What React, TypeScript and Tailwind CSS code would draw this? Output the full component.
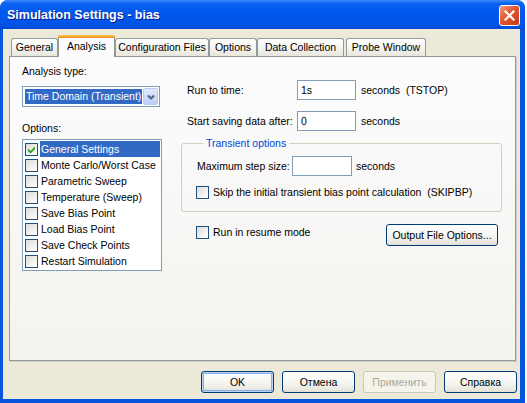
import React from "react";

const tabs = [
  { label: "General", w: "w-[47px]" },
  { label: "Analysis", w: "w-[57px]", active: true },
  { label: "Configuration Files", w: "w-[94px]" },
  { label: "Options", w: "w-[48px]" },
  { label: "Data Collection", w: "w-[87px]" },
  { label: "Probe Window", w: "w-[80px] ml-[2px]" },
];

const options = [
  "General Settings",
  "Monte Carlo/Worst Case",
  "Parametric Sweep",
  "Temperature (Sweep)",
  "Save Bias Point",
  "Load Bias Point",
  "Save Check Points",
  "Restart Simulation",
];

function CheckBox({ checked }: { checked?: boolean }) {
  return (
    <span className="w-[13px] h-[13px] shrink-0 border border-[#1C5180] bg-[linear-gradient(135deg,#DCDCD7,#FFFFFF)] flex items-center justify-center">
      {checked && (
        <svg width="9" height="9" viewBox="0 0 9 9">
          <path d="M1 3.5 L3.5 6 L8 1.5 L8 4 L3.5 8.5 L1 6 Z" fill="#21A121" />
        </svg>
      )}
    </span>
  );
}

function TextBox({ value, w }: { value: string; w: string }) {
  return (
    <div className={`${w} h-[20px] shrink-0 border border-[#7F9DB9] bg-white flex items-center pl-[3px]`}>
      {value}
    </div>
  );
}

function Button({
  children,
  w,
  disabled,
  isDefault,
}: {
  children: React.ReactNode;
  w: string;
  disabled?: boolean;
  isDefault?: boolean;
}) {
  return (
    <div
      className={`${w} h-[22px] shrink-0 rounded-[3px] border flex items-center justify-center ${
        disabled
          ? "border-[#C9C7BA] bg-[#F5F4EA] text-[#ACA899]"
          : "border-[#003C74] bg-[linear-gradient(to_bottom,#FFFFFF,#F4F3EE_60%,#E3E1D6)] text-black"
      } ${isDefault ? "shadow-[inset_0_0_0_1px_#BCD4F6,inset_0_0_0_2px_#89ADE4]" : ""}`}
    >
      {children}
    </div>
  );
}

export default function App() {
  return (
    <div className="w-[527px] h-[403px] bg-white overflow-hidden whitespace-nowrap font-['Liberation_Sans',Arial,sans-serif] text-[10.5px] leading-[13px] text-black">
      <div className="w-[525px] h-[403px] rounded-t-[8px] bg-[#0855DD] flex flex-col">
        {/* Title bar */}
        <div className="h-[29px] shrink-0 rounded-t-[8px] bg-[linear-gradient(to_bottom,#3D8EFB_0%,#0A61F1_12%,#0058EE_40%,#0055E8_80%,#0049D6_100%)] flex items-center justify-between pl-[7px] pr-[5px] pt-[1px]">
          <span className="text-white font-bold text-[12.5px] [text-shadow:1px_1px_0_#0A1E8A]">
            Simulation Settings - bias
          </span>
          <div className="w-[21px] h-[21px] rounded-[3px] border border-white bg-[linear-gradient(135deg,#F09A7C,#E2552C_45%,#C63A17)] flex items-center justify-center">
            <svg width="11" height="11" viewBox="0 0 11 11">
              <path d="M1.5 1.5 L9.5 9.5 M9.5 1.5 L1.5 9.5" stroke="white" strokeWidth="2.2" strokeLinecap="square" />
            </svg>
          </div>
        </div>

        {/* Body */}
        <div className="flex-1 ml-[3px] mr-[5px] mb-[4px] bg-[#ECE9D8] pt-[6px] pl-[6px] pr-[4px] flex flex-col">
          {/* Tabs */}
          <div className="h-[21px] flex items-end pl-[2px]">
            {tabs.map((t) =>
              t.active ? (
                <div
                  key={t.label}
                  className={`${t.w} h-[22px] -mb-[1px] relative z-10 rounded-t-[3px] border-x border-[#919B9C] bg-[#FCFCFE] flex flex-col`}
                >
                  <div className="h-[3px] rounded-t-[3px] bg-[linear-gradient(to_bottom,#FFC83C,#E68B2C)] -mx-[1px]" />
                  <div className="flex-1 flex items-center justify-center pb-[3px]">{t.label}</div>
                </div>
              ) : (
                <div
                  key={t.label}
                  className={`${t.w} h-[18px] rounded-t-[3px] border-t border-x border-[#919B9C] bg-[linear-gradient(to_bottom,#FFFFFF,#F3F2EC_60%,#E8E6DC)] flex items-center justify-center`}
                >
                  {t.label}
                </div>
              )
            )}
          </div>

          {/* Panel */}
          <div className="h-[305px] border border-[#919B9C] bg-[linear-gradient(to_bottom,#FCFCFE,#F4F3EE)] shadow-[1px_1px_0_#D0CEBF] flex pl-[12px]">
            {/* Left column */}
            <div className="w-[140px] shrink-0 pt-[8px] flex flex-col">
              <div className="h-[13px]">Analysis type:</div>
              <div className="mt-[8px] w-[138px] h-[21px] border border-[#7F9DB9] bg-white flex items-center p-[1px]">
                <div className="flex-1 h-[15px] ml-[1px] bg-[#316AC5] text-white flex items-center pl-[1px] overflow-hidden">
                  Time Domain (Transient)
                </div>
                <div className="w-[15px] h-[17px] shrink-0 ml-[1px] rounded-[2px] border border-[#B9CCF5] bg-[linear-gradient(to_bottom,#E0E9FD,#BCCFF9)] flex items-center justify-center">
                  <svg width="8" height="6" viewBox="0 0 8 6">
                    <path d="M1 1.5 L4 4.5 L7 1.5" stroke="#4D6185" strokeWidth="2" fill="none" />
                  </svg>
                </div>
              </div>
              <div className="mt-[15px] h-[13px]">Options:</div>
              <div className="mt-[4px] w-[140px] h-[132px] border border-[#7F9DB9] bg-white pt-[1px] flex flex-col">
                {options.map((o, i) => (
                  <div key={o} className="h-[16px] flex items-center pl-[2px]">
                    <CheckBox checked={i === 0} />
                    <div
                      className={`ml-[2px] mr-[1px] flex-1 h-[16px] flex items-center pl-[1px] overflow-hidden ${
                        i === 0 ? "bg-[#316AC5] text-white" : ""
                      }`}
                    >
                      {o}
                    </div>
                  </div>
                ))}
              </div>
            </div>

            {/* Right column */}
            <div className="ml-[19px] w-[321px] shrink-0 flex flex-col">
              <div className="mt-[23px] h-[20px] flex items-center">
                <div className="w-[116px] shrink-0 pl-[6px]">Run to time:</div>
                <TextBox value="1s" w="w-[59px]" />
                <div className="ml-[5px] whitespace-pre">seconds  (TSTOP)</div>
              </div>
              <div className="mt-[11px] h-[20px] flex items-center">
                <div className="w-[116px] shrink-0 pl-[6px]">Start saving data after:</div>
                <TextBox value="0" w="w-[59px]" />
                <div className="ml-[5px]">seconds</div>
              </div>

              <fieldset className="mt-[6px] border border-[#D0D0BF] rounded-[3px] pl-[15px] pb-[12px]">
                <legend className="ml-[6px] px-[3px] text-[#0046D5] leading-[13px]">Transient options</legend>
                <div className="mt-[6px] h-[20px] flex items-center">
                  <div className="w-[95px] shrink-0">Maximum step size:</div>
                  <TextBox value="" w="w-[60px]" />
                  <div className="ml-[4px]">seconds</div>
                </div>
                <div className="mt-[10px] h-[13px] flex items-center -ml-[1px]">
                  <CheckBox />
                  <span className="ml-[4px] whitespace-pre">Skip the initial transient bias point calculation  (SKIPBP)</span>
                </div>
              </fieldset>

              <div className="mt-[12px] h-[21px] flex items-start justify-between pl-[15px] pr-[4px]">
                <div className="mt-[2px] flex items-center">
                  <CheckBox />
                  <span className="ml-[4px]">Run in resume mode</span>
                </div>
                <Button w="w-[112px]">Output File Options...</Button>
              </div>
            </div>
          </div>

          {/* Dialog buttons */}
          <div className="mt-[10px] flex justify-end gap-[8px] -mr-[1px]">
            <Button w="w-[73px]" isDefault>
              OK
            </Button>
            <Button w="w-[73px]">Отмена</Button>
            <Button w="w-[73px]" disabled>
              Применить
            </Button>
            <Button w="w-[73px]">Справка</Button>
          </div>
        </div>
      </div>
    </div>
  );
}
